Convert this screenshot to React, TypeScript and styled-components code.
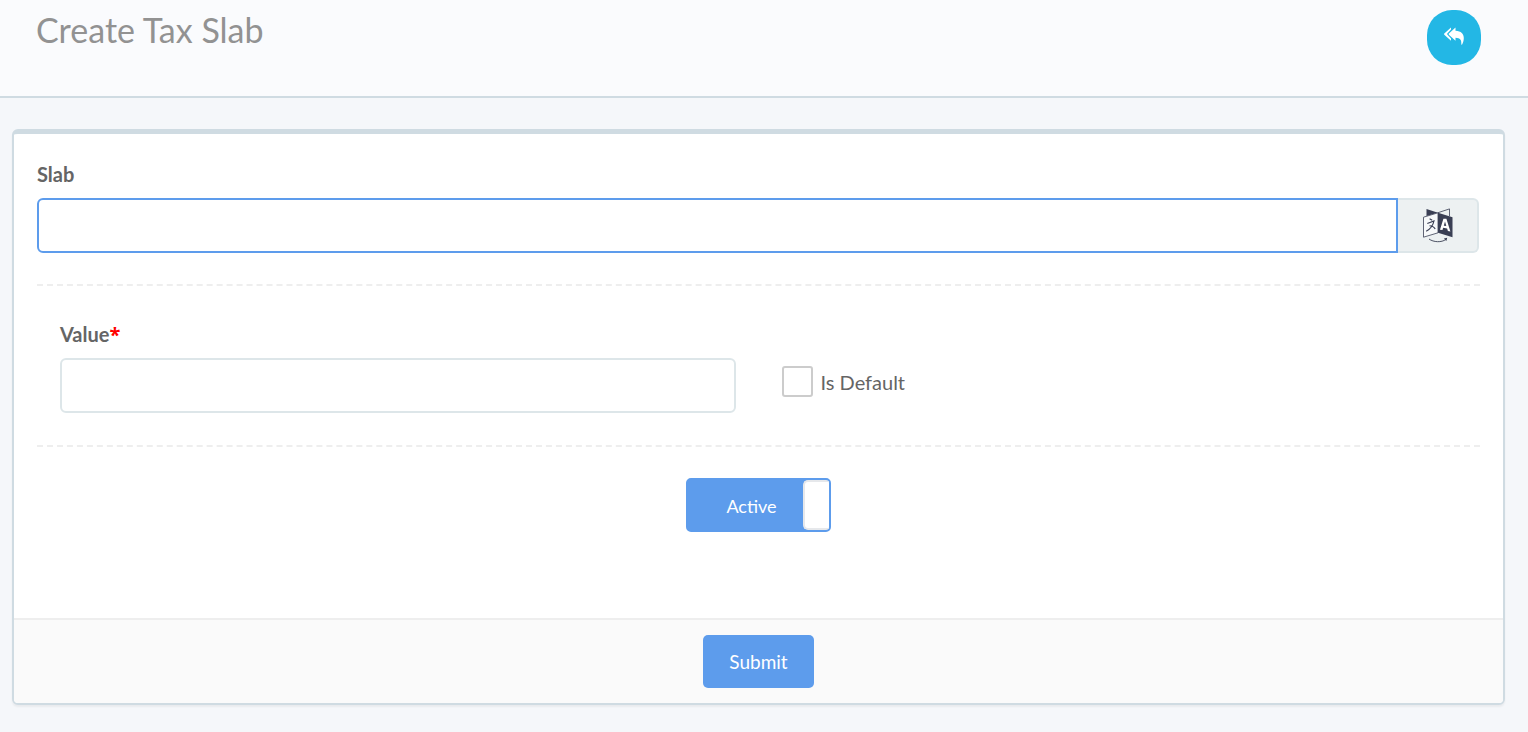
import React, { useState } from "react";
import styled, { createGlobalStyle } from "styled-components";

const GlobalStyle = createGlobalStyle`
  *, *::before, *::after { box-sizing: border-box; }
  body {
    margin: 0;
    background: #f5f7fa;
    color: #656565;
    font-family: Lato, "Open Sans", sans-serif;
    font-size: 20px;
    line-height: 28px;
  }
  button, input { font: inherit; }
`;

const Header = styled.header`
  display: flex;
  justify-content: space-between;
  align-items: flex-start;
  height: 98px;
  padding: 10px 47px 0 36px;
  background: #fafbfd;
  border-bottom: 2px solid #cfdbe2;
`;

const Title = styled.h1`
  margin: 0;
  font-size: 34px;
  line-height: 40px;
  font-weight: 400;
  color: #929292;
`;

const BackButton = styled.button`
  display: grid;
  place-items: center;
  width: 54px;
  height: 55px;
  padding: 0 0 4px;
  border: 0;
  border-radius: 25px;
  background: #23b7e5;
  color: #fff;
  cursor: pointer;
`;

const Main = styled.main`
  padding: 31px 23px 27px 12px;
`;

const Card = styled.form`
  overflow: hidden;
  border: 2px solid #cfdbe2;
  border-top-width: 5px;
  border-radius: 6px;
  background: #fff;
  box-shadow: 0 2px 2px rgba(0, 0, 0, 0.05);
`;

const CardBody = styled.div`
  padding: 26px 23px 86px;
`;

const Label = styled.label`
  display: block;
  height: 28px;
  margin-bottom: 10px;
  font-weight: 700;
`;

const Required = styled.span`
  color: #f00;
  font-family: "Open Sans", sans-serif;
`;

const InputGroup = styled.div`
  display: flex;
  padding-right: 1px;
`;

const TextInput = styled.input<{ $grouped?: boolean }>`
  display: block;
  flex: 1;
  width: 100%;
  min-width: 0;
  height: 55px;
  padding: 8px 22px;
  border: 2px solid #dde6e9;
  border-radius: ${(p) => (p.$grouped ? "6px 0 0 6px" : "6px")};
  background: #fff;
  color: inherit;
  outline: 0;
  &:focus { border-color: #5d9cec; }
`;

const Addon = styled.button`
  display: grid;
  place-items: center;
  width: 81px;
  height: 55px;
  padding: 0;
  border: 2px solid #dde6e9;
  border-left: 0;
  border-radius: 0 6px 6px 0;
  background: #edf1f2;
  cursor: pointer;
`;

const Divider = styled.hr`
  margin: 31px 0;
  border: 0;
  border-top: 2px dashed #eee;
`;

const Columns = styled.div`
  display: grid;
  grid-template-columns: 1fr 1fr;
  align-items: start;
  padding: 3px 0 1px;
`;

const Column = styled.div`
  padding: 0 23px;
`;

const CheckLabel = styled.label`
  display: flex;
  align-items: center;
  gap: 8px;
  margin-top: 46px;
`;

const Checkbox = styled.input`
  appearance: none;
  width: 31px;
  height: 31px;
  margin: 0;
  border: 2px solid #ccc;
  border-radius: 3px;
  background: #fff;
  &:checked { background: #5d9cec; border-color: #5d9cec; }
`;

const SwitchRow = styled.div`
  display: flex;
  justify-content: center;
`;

const Switch = styled.button<{ $on: boolean }>`
  display: flex;
  flex-direction: ${(p) => (p.$on ? "row" : "row-reverse")};
  width: 145px;
  height: 54px;
  padding: 0;
  overflow: hidden;
  border: 2px solid #5d9cec;
  border-radius: 5px;
  background: #5d9cec;
  color: #fff;
  cursor: pointer;
`;

const SwitchText = styled.span`
  flex: 1;
  padding: 12px 0 0 12px;
  text-align: center;
  font-size: 18px;
`;

const SwitchHandle = styled.span`
  width: 26px;
  height: 50px;
  border: 2px solid #e6e8eb;
  border-right: 0;
  border-radius: 5px 0 0 5px;
  background: #fff;
`;

const CardFooter = styled.footer`
  display: flex;
  justify-content: center;
  padding: 15px 23px;
  border-top: 2px solid #eee;
  background: #fafafa;
`;

const SubmitButton = styled.button`
  height: 53px;
  padding: 0 26px;
  border: 0;
  border-radius: 5px;
  background: #5d9cec;
  color: #fff;
  font-size: 19px;
  cursor: pointer;
`;

const ReplyAllIcon = () => (
  <svg width="20" height="18" viewBox="0 0 20 18" fill="currentColor" aria-hidden="true">
    <path d="M7 .4v2.200L2.900 7.100 7 11.600v2.200L.3 7.700a.9.9 0 0 1 0-1.200Z" />
    <path d="M11.500.5v3.200c5.700.3 8.300 3.200 8.300 7.300 0 2.400-.7 4.700-1.700 6.400-.3.500-.9.300-.8-.3.300-4-1-6.100-5.800-6.300v3L4.900 7.700a.9.9 0 0 1 0-1.200Z" />
  </svg>
);

const TranslateIcon = () => (
  <svg width="30" height="36" viewBox="0 0 30 36" fill="none" aria-hidden="true">
    <path d="M3.500 1 15 4.700 3.500 8Z" fill="#3a3f54" />
    <path d="M15 4.700 26.500.9v7.300" stroke="#3a3f54" strokeWidth=".8" />
    <path d="M.5 9.200 15 4.800v20L.5 29.200Z" fill="#f7f9fa" stroke="#3a3f54" strokeWidth=".8" />
    <path d="m15 4.800 14.500 4.400v20L15 24.800Z" fill="#3a3f54" />
    <path d="m6.600 10.800 2.600 1.500M4.300 15.500l6.700-2.600c-1 4.800-4 8.400-7.800 10.300M6.500 17.700c2.300 0 4.500 1.100 5.700 3.300" stroke="#3a3f54" strokeWidth="1.100" />
    <path fillRule="evenodd" d="M17 21.700 20.400 10.700h3l4 12.800-2.500-.5-.8-2.600-4-.6-.6 2.200Zm3.800-4 2.500.4-1.300-4.500Z" fill="#fff" />
    <path d="M6 31c4.500 3.300 12.500 3.700 17 .4" stroke="#3a3f54" strokeWidth=".9" />
    <path d="m20.900 30.400 3.300-.6-.8 3.200Z" fill="#3a3f54" />
  </svg>
);

export default function App() {
  const [slab, setSlab] = useState("");
  const [value, setValue] = useState("");
  const [active, setActive] = useState(true);

  return (
    <>
      <GlobalStyle />
      <Header>
        <Title>Create Tax Slab</Title>
        <BackButton type="button" aria-label="Back">
          <ReplyAllIcon />
        </BackButton>
      </Header>
      <Main>
        <Card onSubmit={(e) => e.preventDefault()}>
          <CardBody>
            <Label htmlFor="slab">Slab</Label>
            <InputGroup>
              <TextInput
                id="slab"
                $grouped
                autoFocus
                autoComplete="off"
                value={slab}
                onChange={(e) => setSlab(e.target.value)}
              />
              <Addon type="button" aria-label="Translate">
                <TranslateIcon />
              </Addon>
            </InputGroup>
            <Divider />
            <Columns>
              <Column>
                <Label htmlFor="value">
                  Value<Required>*</Required>
                </Label>
                <TextInput
                  id="value"
                  required
                  autoComplete="off"
                  value={value}
                  onChange={(e) => setValue(e.target.value)}
                />
              </Column>
              <Column>
                <CheckLabel>
                  <Checkbox type="checkbox" />
                  Is Default
                </CheckLabel>
              </Column>
            </Columns>
            <Divider />
            <SwitchRow>
              <Switch
                type="button"
                role="switch"
                aria-checked={active}
                $on={active}
                onClick={() => setActive(!active)}
              >
                <SwitchText>{active ? "Active" : "Inactive"}</SwitchText>
                <SwitchHandle />
              </Switch>
            </SwitchRow>
          </CardBody>
          <CardFooter>
            <SubmitButton type="submit">Submit</SubmitButton>
          </CardFooter>
        </Card>
      </Main>
    </>
  );
}
